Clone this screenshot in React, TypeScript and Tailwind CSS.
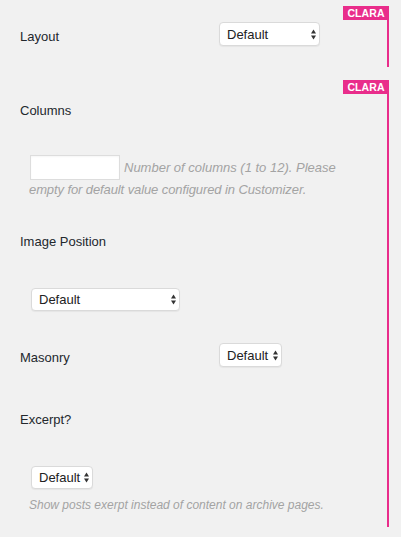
import React from "react";

const PINK = "bg-[#e92d8b]";

function Arrows() {
  return (
    <svg width="5" height="11" viewBox="0 0 5 11" className="shrink-0">
      <polygon points="0,4.5 2.5,0.5 5,4.5" fill="#333" />
      <polygon points="0,6.5 5,6.5 2.5,10.5" fill="#333" />
    </svg>
  );
}

function Select({ className }: { className: string }) {
  return (
    <div
      className={`flex items-center justify-between bg-white border border-[#dadada] rounded-[4px] pl-[7px] pr-[3px] shadow-[0_1px_1px_rgba(0,0,0,0.05)] text-[#222] shrink-0 ${className}`}
    >
      <span>Default</span>
      <Arrows />
    </div>
  );
}

function Badge() {
  return (
    <div className="flex justify-end">
      <div
        className={`${PINK} h-[14px] w-[46px] flex items-center justify-center text-white font-bold text-[10.5px] leading-[14px] tracking-[0.1px]`}
      >
        CLARA
      </div>
    </div>
  );
}

export default function App() {
  return (
    <div className="w-[401px] h-[537px] overflow-hidden bg-[#f1f1f1] font-['Liberation_Sans',Arial,sans-serif] text-[13px] leading-[15px] text-[#23282d] pt-[6px]">
      {/* Section 1 */}
      <div className="w-[389px]">
        <Badge />
        <div className="border-r-2 border-[#e92d8b] h-[47px] flex items-start pl-[20px]">
          <div className="pt-[9px] w-[199px]">Layout</div>
          <Select className="mt-[2px] w-[101px] h-[24px]" />
        </div>
      </div>

      {/* Section 2 */}
      <div className="w-[389px] mt-[13px]">
        <Badge />
        <div className="border-r-2 border-[#e92d8b] pb-[14px]">
          <div className="pt-[9px] pl-[20px]">Columns</div>

          <div className="mt-[37px] pl-[30px] flex items-center">
            <div className="w-[90px] h-[25px] bg-white border border-[#dddddd] shadow-[inset_0_1px_2px_rgba(0,0,0,0.04)] shrink-0" />
            <span className="ml-[4px] italic text-[#a3a3a3] whitespace-nowrap">
              Number of columns (1 to 12). Please
            </span>
          </div>
          <div className="mt-[2px] pl-[29px] italic text-[#a3a3a3] whitespace-nowrap tracking-[-0.1px]">
            empty for default value configured in Customizer.
          </div>

          <div className="mt-[37px] pl-[20px]">Image Position</div>

          <div className="mt-[39px] pl-[31px] flex">
            <Select className="w-[149px] h-[23px]" />
          </div>

          <div className="mt-[32px] pl-[20px] flex items-start">
            <div className="pt-[7px] w-[199px]">Masonry</div>
            <Select className="w-[63px] h-[24px]" />
          </div>

          <div className="mt-[45px] pl-[20px]">Excerpt?</div>

          <div className="mt-[39px] pl-[31px] flex">
            <Select className="w-[62px] h-[23px]" />
          </div>

          <div className="mt-[9px] pl-[29px] italic text-[#a3a3a3] whitespace-nowrap text-[12px]">
            Show posts exerpt instead of content on archive pages.
          </div>
        </div>
      </div>
    </div>
  );
}
